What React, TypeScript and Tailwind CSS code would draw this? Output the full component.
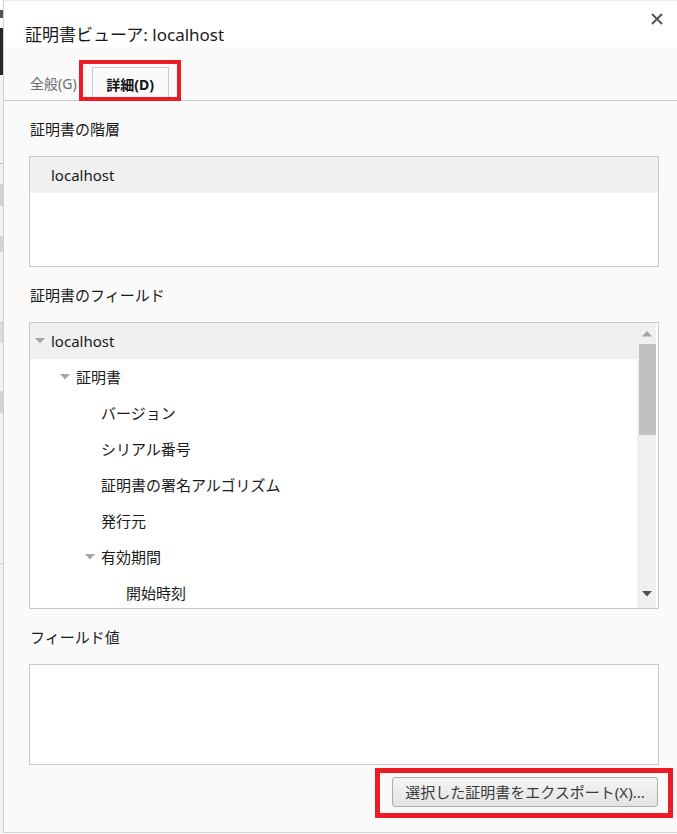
import React from "react";

type Node = { label: string; depth: number; open?: boolean; selected?: boolean };

const fields: Node[] = [
  { label: "localhost", depth: 0, open: true, selected: true },
  { label: "証明書", depth: 1, open: true },
  { label: "バージョン", depth: 2 },
  { label: "シリアル番号", depth: 2 },
  { label: "証明書の署名アルゴリズム", depth: 2 },
  { label: "発行元", depth: 2 },
  { label: "有効期間", depth: 2, open: true },
  { label: "開始時刻", depth: 3 },
];

const font = { fontFamily: '"Segoe UI", "Noto Sans", "Noto Sans CJK JP", sans-serif' };

function Caret() {
  return (
    <svg width="10" height="6" viewBox="0 0 10 6" className="shrink-0">
      <path d="M0 0 L10 0 L5 5.5 Z" fill="#a6a6a6" />
    </svg>
  );
}

function TreeRow({ node }: { node: Node }) {
  // every level is pushed 25px further in; the caret slot is 16px before the text
  const pad = ["pl-[5px]", "pl-[30px]", "pl-[55px]", "pl-[80px]"][node.depth];
  return (
    <div
      className={`h-[36px] shrink-0 flex items-center ${pad} ${node.selected ? "bg-[#f0f0f0]" : ""}`}
    >
      <div className="w-[16px] shrink-0 flex items-center">{node.open && <Caret />}</div>
      <span className="text-[15px] text-[#1a1a1a] leading-none">{node.label}</span>
    </div>
  );
}

function Label({ text }: { text: string }) {
  return (
    <div className="h-[55px] flex items-center pl-[26px] pt-[1px]">
      <span className="text-[15px] text-[#1a1a1a] leading-none">{text}</span>
    </div>
  );
}

function LeftEdge() {
  // sliver of the page behind the dialog
  return (
    <div className="w-[3px] shrink-0 flex flex-col bg-[#f3f3f3]">
      <div className="h-[28px] bg-white flex items-center">
        <div className="w-[3px] h-[8px] bg-[#555]" />
      </div>
      <div className="h-[47px] bg-[#26282b]" />
      <div className="h-[88px]" />
      <div className="h-[1px] bg-[#bdbdbd]" />
      <div className="h-[20px]" />
      <div className="h-[22px] bg-[#d4d4d4]" />
      <div className="h-[30px]" />
      <div className="h-[16px] bg-[#d4d4d4]" />
      <div className="h-[70px]" />
      <div className="h-[1px] bg-[#bdbdbd]" />
      <div className="h-[20px] bg-[#dcdcdc]" />
      <div className="h-[48px]" />
      <div className="h-[22px] bg-[#d4d4d4]" />
      <div className="h-[150px]" />
      <div className="h-[1px] bg-[#cfcfcf]" />
      <div className="flex-1" />
    </div>
  );
}

export default function App() {
  return (
    <div className="relative w-[677px] h-[834px] flex bg-white overflow-hidden" style={font}>
      <LeftEdge />

      <div className="flex-1 h-[833px] flex flex-col border-l border-b border-t border-[#cfcfcf] border-t-[#ececec] bg-[#fafafa]">
        {/* Title bar */}
        <div className="h-[46px] shrink-0 bg-white flex items-start justify-between">
          <div className="pl-[21px] pt-[25px] text-[17px] text-[#1a1a1a] leading-none">
            証明書ビューア: localhost
          </div>
          <button className="mr-[13px] mt-[11px] w-[14px] h-[14px] flex items-center justify-center">
            <svg width="12" height="12" viewBox="0 0 12 12">
              <path d="M1 1 L11 11 M11 1 L1 11" stroke="#555" strokeWidth="2" />
            </svg>
          </button>
        </div>

        {/* Tabs */}
        <div className="h-[54px] shrink-0 flex items-end border-b border-[#c9c9c9] pl-[26px]">
          <div className="h-[33px] flex items-center pr-[15px]">
            <span className="text-[14px] text-[#6d6d6d] leading-none">全般(G)</span>
          </div>
          <div className="h-[34px] -mb-px w-[77px] flex items-center justify-center border border-b-0 border-[#cccccc] bg-[#fafafa]">
            <span className="text-[14px] font-bold text-[#111] leading-none">詳細(D)</span>
          </div>
        </div>

        {/* Hierarchy */}
        <Label text="証明書の階層" />
        <div className="ml-[25px] w-[630px] h-[111px] shrink-0 border border-[#c9c9c9] bg-white">
          <div className="h-[36px] flex items-center pl-[21px] bg-[#f0f0f0]">
            <span className="text-[15px] text-[#1a1a1a] leading-none">localhost</span>
          </div>
        </div>

        {/* Fields */}
        <Label text="証明書のフィールド" />
        <div className="ml-[25px] w-[630px] h-[287px] shrink-0 border border-[#c9c9c9] bg-white flex overflow-hidden">
          <div className="flex-1 flex flex-col overflow-hidden">
            {fields.map((n) => (
              <TreeRow key={n.label} node={n} />
            ))}
          </div>
          <div className="w-[19px] mr-[2px] bg-[#f0f0f0] flex flex-col">
            <div className="h-[21px] flex items-center justify-center">
              <svg width="10" height="6" viewBox="0 0 10 6">
                <path d="M0 5.5 L10 5.5 L5 0 Z" fill="#a3a3a3" />
              </svg>
            </div>
            <div className="ml-[2px] h-[91px] bg-[#c1c1c1]" />
            <div className="flex-1" />
            <div className="h-[24px] flex items-start justify-center pt-[7px]">
              <svg width="10" height="6" viewBox="0 0 10 6">
                <path d="M0 0 L10 0 L5 5.5 Z" fill="#505050" />
              </svg>
            </div>
          </div>
        </div>

        {/* Field value */}
        <Label text="フィールド値" />
        <div className="ml-[25px] w-[630px] h-[101px] shrink-0 border border-[#c9c9c9] bg-white" />

        <div className="ml-[25px] w-[630px] flex justify-end pt-[12px]">
          <button className="mr-[1px] w-[266px] h-[30px] rounded-[3px] border border-[#adadad] bg-gradient-to-b from-[#f4f4f4] to-[#e4e4e4] flex items-center justify-center">
            <span className="text-[15px] text-[#3a3a3a] leading-none">選択した証明書をエクスポート(X)...</span>
          </button>
        </div>
      </div>

      {/* red annotation frames */}
      <div className="absolute left-[79px] top-[60px] w-[102px] h-[41px] border-[4px] border-[#ed1c24]" />
      <div className="absolute left-[375px] top-[768px] w-[298px] h-[50px] border-[5px] border-[#ed1c24]" />
    </div>
  );
}
